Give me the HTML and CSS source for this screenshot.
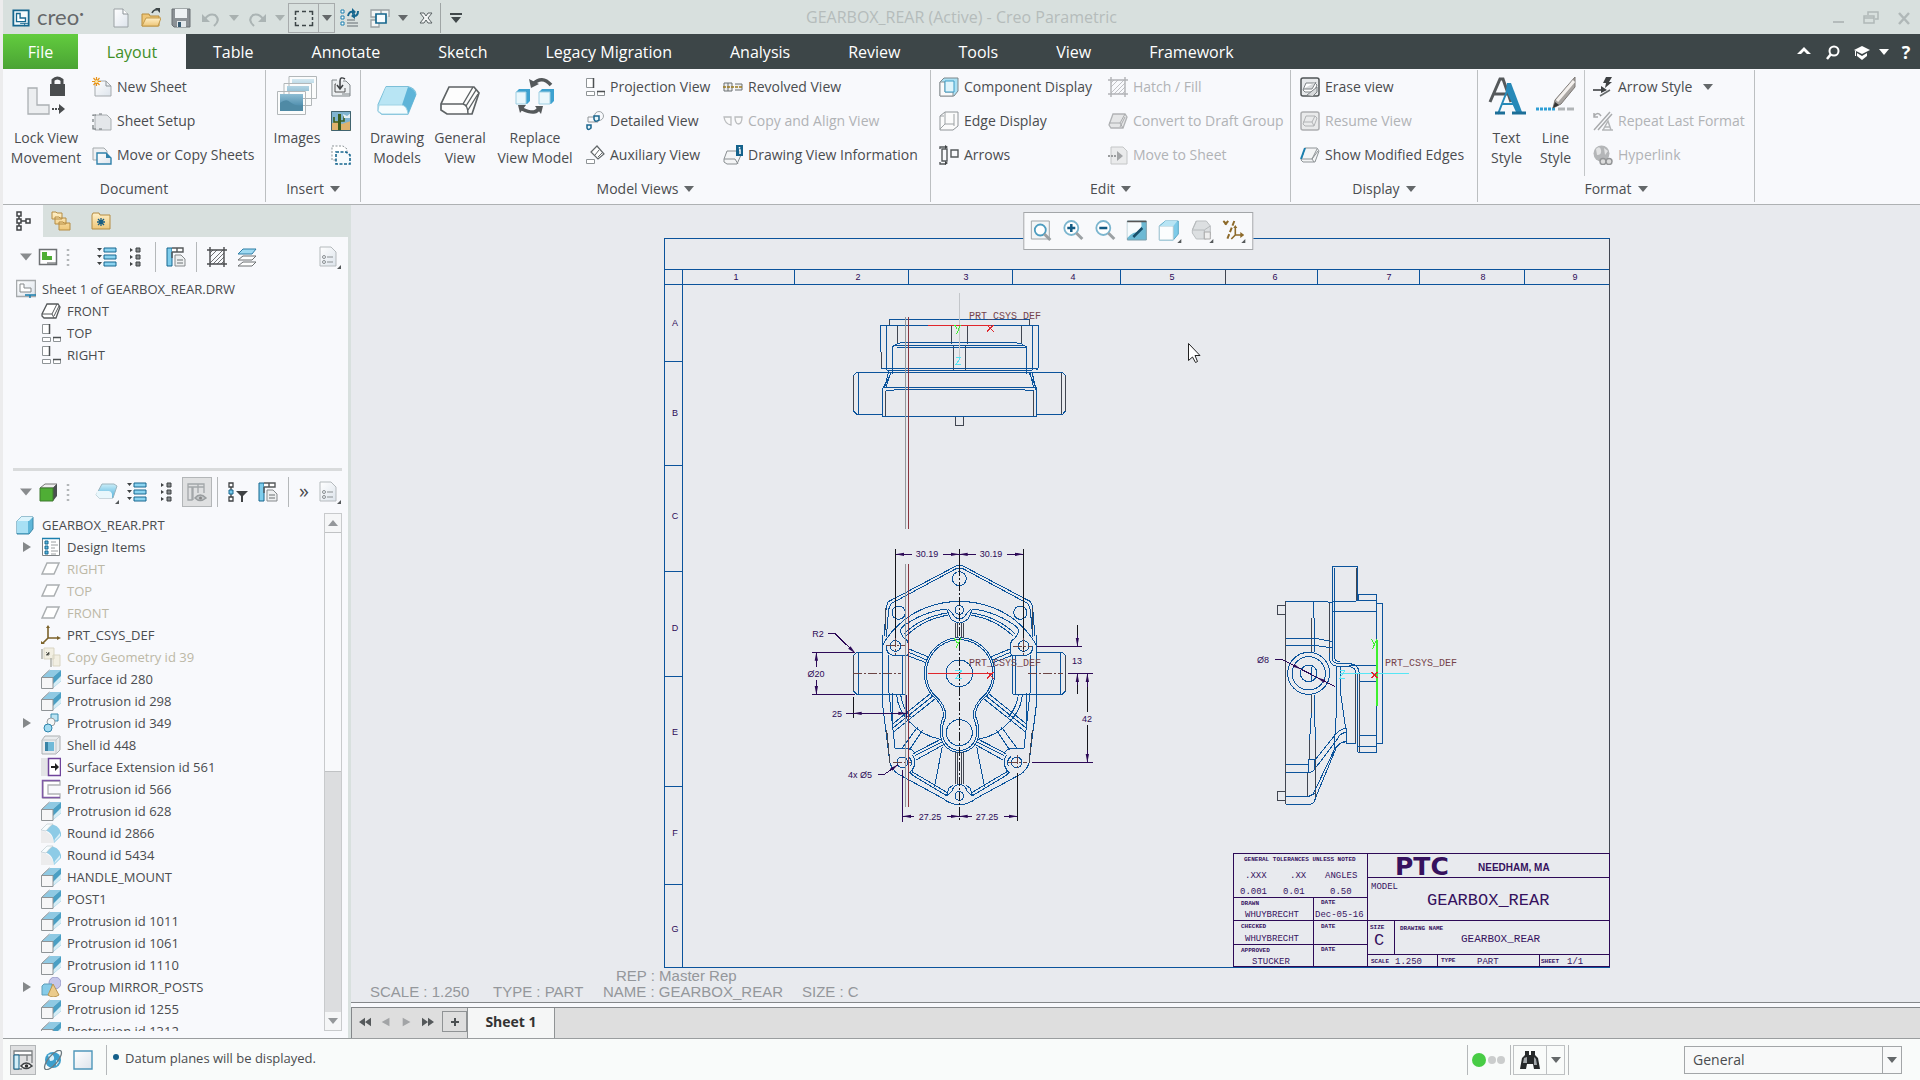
FILE: index.html
```html
<!DOCTYPE html>
<html lang="en">
<head>
<meta charset="utf-8">
<title>GEARBOX_REAR (Active) - Creo Parametric</title>
<link rel="stylesheet" href="styles.css">
</head>
<body>
<svg class="sprite" aria-hidden="true">
  <defs>
    <linearGradient id="g-blue" x1="0" y1="0" x2="0" y2="1"><stop offset="0" stop-color="#c9edf8"/><stop offset="1" stop-color="#4fb0dc"/></linearGradient>
    <linearGradient id="g-page" x1="0" y1="0" x2="1" y2="1"><stop offset="0" stop-color="#fff"/><stop offset="1" stop-color="#dde4ec"/></linearGradient>
    <linearGradient id="g-folder" x1="0" y1="0" x2="0" y2="1"><stop offset="0" stop-color="#fff0c8"/><stop offset="1" stop-color="#eec678"/></linearGradient>
    <linearGradient id="g-pic" x1="0" y1="0" x2="0" y2="1"><stop offset="0" stop-color="#d3e8f1"/><stop offset=".5" stop-color="#88b9d0"/><stop offset="1" stop-color="#377c9f"/></linearGradient>
  </defs>
  <symbol id="logo" viewBox="0 0 20 20"><path d="M1.500 1.500h17v17h-17z" fill="#f4fafc" stroke="#17678f" stroke-width="2"/><path d="M5 5h4v5h6v4H5z" fill="#fff" stroke="#17678f" stroke-width="1.500"/><path d="M9 16h9M14 16v3" stroke="#17678f"/></symbol>
  <symbol id="new" viewBox="0 0 20 20"><path d="M3 1h9l5 5v13H3z" fill="url(#g-page)" stroke="#9aa1a4"/><path d="M12 1v5h5" fill="#fff" stroke="#8b9397"/></symbol>
  <symbol id="open" viewBox="0 0 20 20"><path d="M1 18V6h7l1 2h9v10z" fill="#eec678" stroke="#b98d3c"/><path d="M1 18l4-8h15l-3 8z" fill="url(#g-folder)" stroke="#c39a4b"/><path d="M11 5q2-4 5-3" fill="none" stroke="#3d4648" stroke-width="1.500"/><path d="M14 0h5v5z" fill="#3d4648"/></symbol>
  <symbol id="save" viewBox="0 0 20 20"><path d="M1 1h18v18H3l-2-2z" fill="#8b9195" stroke="#6a7175"/><path d="M4 1h12v9H4z" fill="#eef2f4"/><path d="M6 13h9v6H6z" fill="#e3e8eb"/><path d="M7 14h3v5H7z" fill="#375a70"/></symbol>
  <symbol id="undo" viewBox="0 0 20 20"><path d="M4 11q4-6 10-4 6 5-1 11" fill="none" stroke="#abb4b4" stroke-width="2.200"/><path d="M1 6v8h8z" fill="#abb4b4"/></symbol>
  <symbol id="caret" viewBox="0 0 10 10"><path d="M0 2h10L5 8z" fill="currentColor"/></symbol>
  <symbol id="caret-bar" viewBox="0 0 12 12"><path d="M0 1h12v2H0zM1 5h10L6 11z" fill="#41484a"/></symbol>
  <symbol id="marquee" viewBox="0 0 20 20"><path d="M1.500 7V3.500H5M8 3.500h4M15 3.500h3.500V7M18.500 9v3M18.500 14v3.500H15M12 17.500H8M5 17.500H1.500V14M1.500 12V9" fill="none" stroke="#3d4648" stroke-width="1.500"/></symbol>
  <symbol id="regen" viewBox="0 0 20 20"><path d="M1 2h3v3H1zM1 8h3v3H1zM1 14h3v3H1z" fill="#fff" stroke="#1b7fae"/><path d="M7 12h8M7 15h11M7 18h11" stroke="#8b9397" stroke-width="1.500"/><path d="M8 8q1-5 5-4M18 3q0 5-4 5" fill="none" stroke="#17678f" stroke-width="2"/><path d="M12 0l4 4-4 3zM15 5l-4 3 4 3z" fill="#17678f"/></symbol>
  <symbol id="windows" viewBox="0 0 20 20"><path d="M1 2h10v7H1zM1 12h8v7H1zM8 2h11v7" fill="#f2f5f5" stroke="#9aa1a4" stroke-width="1.300"/><path d="M6 6h10v9H6z" fill="#f7fcfe" stroke="#17678f" stroke-width="1.700"/></symbol>
  <symbol id="closex" viewBox="0 0 16 16"><path d="M2 3h4l2 3 2-3h4l-4 5 4 5h-4l-2-3-2 3H2l4-5z" fill="#f4f6f6" stroke="#5a6264"/></symbol>
  <symbol id="w-min" viewBox="0 0 16 16"><path d="M3 11h11v2H3z" fill="#b4bbbb"/></symbol>
  <symbol id="w-res" viewBox="0 0 16 16"><path d="M5 5V2h10v7h-3M1 6h10v7H1zM1 8h10" fill="none" stroke="#b0b8b8" stroke-width="1.500"/></symbol>
  <symbol id="w-close" viewBox="0 0 16 16"><path d="M3 3l10 11M13 3L3 14" stroke="#b0b8b8" stroke-width="2.500"/></symbol>
  <symbol id="up" viewBox="0 0 16 16"><path d="M1 10l7-7 7 7h-4L8 7l-3 3z" fill="#fff"/></symbol>
  <symbol id="search" viewBox="0 0 16 16"><circle cx="9" cy="7" r="4.500" fill="none" stroke="#fff" stroke-width="2"/><path d="M6 10l-4 5" stroke="#fff" stroke-width="2.500"/></symbol>
  <symbol id="cap" viewBox="0 0 16 16"><path d="M0 6l8-4 8 4-8 4zM3 9l5 3 5-3v3l-5 4-5-4zM1 7h1v5H1z" fill="#fff"/></symbol>
  <symbol id="lock" viewBox="0 0 40 40"><path d="M2 12h9v17h12v9H2z" fill="#eceef0" stroke="#abb0b3" stroke-width="1.300"/><path d="M24 8h15v12H24z" fill="#4a4d4f"/><path d="M27 9V4q4-4 9 0v5" fill="none" stroke="#4a4d4f" stroke-width="3"/><path d="M26 33h9" stroke="#4a4d4f" stroke-width="2" stroke-dasharray="2 1"/><path d="M33 28l6 5-6 5z" fill="#4a4d4f"/></symbol>
  <symbol id="sheet-new" viewBox="0 0 20 20"><path d="M3 4h11l5 5v10H3z" fill="url(#g-page)" stroke="#a5aaad"/><path d="M14 4v5h5" fill="none" stroke="#8b9397"/><path d="M4.500 0v9M0 4.500h9M1.500 1l6 7M7.500 1l-6 7" stroke="#e8941c" stroke-width="1.200"/><circle cx="4.500" cy="4.500" r="1.500" fill="#ffe9a0"/></symbol>
  <symbol id="sheet-setup" viewBox="0 0 20 20"><path d="M3 4h12l4 4v11H3z" fill="#e4e7ea" stroke="#a9aeb1"/><path d="M1 5v-1h3M1 8v3M1 14v4h3M7 3h3M7 18h3" fill="none" stroke="#70777a" stroke-width="1.200"/></symbol>
  <symbol id="sheet-copy" viewBox="0 0 20 20"><path d="M1 3h11l3 3v9H1z" fill="#eff1f3" stroke="#a5aaad"/><path d="M5 8h9l5 5v6H5z" fill="url(#g-page)" stroke="#3081aa" stroke-width="1.400"/><path d="M14 8v5h5z" fill="#3081aa"/></symbol>
  <symbol id="images" viewBox="0 0 40 40"><path d="M12 .500h27.500v22H12zM7 7.500h27.500v22H7zM.500 15.500h28v23H.500z" fill="#fbfcfc" stroke="#b2b7b9"/><path d="M15 3h22v4H15zM10 10h22v5H10zM3 18h23v17H3z" fill="url(#g-pic)"/><path d="M3 27q6-5 10-1 6 5 13 3v6H3z" fill="#4f8aa5"/></symbol>
  <symbol id="insert-sheet" viewBox="0 0 20 20"><path d="M6 3H1v16h18V8l-4-4h-3" fill="#eceff1" stroke="#7f8588"/><path d="M14 2q-5-3-5 2v7M6 8l3 4 3-4" fill="none" stroke="#3f4244" stroke-width="1.500"/><path d="M5 7H4v8h10v-4" fill="none" stroke="#555"/><path d="M11 17h8" stroke="#7f8588"/></symbol>
  <symbol id="cactus" viewBox="0 0 20 20"><path d="M0 0h20v20H0z" fill="#7fb4d0"/><path d="M0 13l5-3 6 3 9-3v10H0z" fill="#dfb26c"/><path d="M7 3h3v16H7z" fill="#3b5e1f"/><path d="M3 6v5h4M13 5v5h-4" fill="none" stroke="#3b5e1f" stroke-width="1.600"/><path d="M12 3l4 2 4-3v5h-7z" fill="#e3eff3"/><path d="M.500.500h19v19H.500z" fill="none" stroke="#41646f"/></symbol>
  <symbol id="overlay" viewBox="0 0 20 20"><path d="M1 1h11l4 3v11H1z" fill="#fff" stroke="#8b9397" stroke-dasharray="2 1.500"/><path d="M5 7h10l4 3v9H5z" fill="#f7fbfd" stroke="#17678f" stroke-width="1.600" stroke-dasharray="3 1.500"/></symbol>
  <symbol id="block-blue" viewBox="0 0 40 30"><path d="M9 .500h22q8 2 8 8l-8 20H5l-4-3v-7z" fill="#a6dff2" stroke="#7cbfd8"/><path d="M9 1h22l-6 18H2z" fill="#b8e5f4"/><path d="M25 19L31 1q7 2 8 8l-8 19q-1-8-6-9z" fill="#5eb4d8"/><path d="M2 19h23q5 1 6 9H5l-4-3z" fill="#f5fcfe" stroke="#9ed2e4"/></symbol>
  <symbol id="block-gray" viewBox="0 0 40 30"><path d="M9 1h25l5 6-7 21H7l-6-4v-6z" fill="#fdfdfd" stroke="#5d6264" stroke-width="1.700"/><path d="M1 18h22q5 1 5 10M23 18L33 1M26 20L36 4M28 24L38 8" fill="none" stroke="#5d6264" stroke-width="1.400"/></symbol>
  <symbol id="replace" viewBox="0 0 40 40"><path d="M1 16l3-3h11v12l-3 3H1zM24 16l3-3h12v12l-3 3H24z" fill="#3ea2d0"/><path d="M1 16h10v12H1zM24 16h11v12H24z" fill="#eaf7fc" stroke="#9fcfe2"/><path d="M18 8Q27-1 36 9M24 31q-2 9-17 2" fill="none" stroke="#55595b" stroke-width="3.500"/><path d="M14 3l2 9 8-4zM20 30l8 0-2 8zM3 29l8 0-6 8z" fill="#55595b"/></symbol>
  <symbol id="proj" viewBox="0 0 20 20"><path d="M1.500 1.500h7v9h-7zM1.500 14.500h8v4h-8zM12.500 14.500h7v4h-7z" fill="#fff" stroke="#8f9497"/><path d="M8.500 1v10M12 14.500h8" stroke="#4c5052" stroke-width="1.500"/></symbol>
  <symbol id="detail" viewBox="0 0 20 20"><circle cx="14" cy="5" r="4.500" fill="none" stroke="#9da3a6"/><path d="M3 6h10v5H3z" fill="none" stroke="#8f9497"/><path d="M9 5h5v4q-4 3-5-1zM2 14h4v3q-3 3-4 0z" fill="#e8f6fb" stroke="#1a668e" stroke-width="1.500"/></symbol>
  <symbol id="aux" viewBox="0 0 20 20"><path d="M12 1l7 8-6 5-7-7z" fill="#fff" stroke="#63686a" stroke-width="1.200"/><path d="M14 5l-4 5M17 8l-4 4" stroke="#63686a"/><path d="M1.500 14.500h8v4h-8z" fill="#fff" stroke="#8f9497"/></symbol>
  <symbol id="revolve" viewBox="0 0 20 20"><path d="M1 6h8v8H1zM5 6v8M12 7h7v6h-7" fill="#eee" stroke="#6b7072"/><path d="M0 10h20" stroke="#9c7b1e" stroke-width="1.500" stroke-dasharray="3 1"/></symbol>
  <symbol id="copyalign" viewBox="0 0 20 20"><path d="M1 6h7v8Q2 13 1 6zM12 6h7q0 7-4 7-3-1-3-7z" fill="#fafafa" stroke="#bbbdbf" stroke-width="1.300"/></symbol>
  <symbol id="info" viewBox="0 0 20 20"><path d="M4 6h10l4 4-4 9H4l-3-2v-3z" fill="#f4f5f6" stroke="#8a8f92"/><path d="M1 14h11l3 5" fill="none" stroke="#8a8f92"/><path d="M13 0h7v11h-7z" fill="#14628c"/><path d="M16 5h1v4M16.500 2v1.500" stroke="#fff" stroke-width="1.500"/></symbol>
  <symbol id="comp" viewBox="0 0 20 20"><path d="M1 5l4-4h14v13l-4 5H1z" fill="#a9e0f4" stroke="#7c878b"/><path d="M1 5h5v10h8v4H1z" fill="#fafafa" stroke="#8d9295"/><path d="M6 4h9v11H6z" fill="#dff4fb" stroke="#3d9cc5"/></symbol>
  <symbol id="edge" viewBox="0 0 20 20"><path d="M1 5l5-4h13v14l-5 4H1z" fill="#fbfbfb" stroke="#909598"/><path d="M6 1v12L1 18M6 13h9M15 3v12M1 5h4" fill="none" stroke="#9da2a5"/></symbol>
  <symbol id="arrows" viewBox="0 0 20 20"><path d="M1 4V2h6M1 17v2h6M3 4h5v12H3zM12 5h7v7h-7z" fill="none" stroke="#54595b" stroke-width="1.400"/><path d="M6 0l3 2-3 2zM6 16l3 2-3 2z" fill="#3f4244"/></symbol>
  <symbol id="hatch" viewBox="0 0 20 20"><path d="M0 3h20M0 17h20M3 0v20M17 0v20" stroke="currentColor" stroke-width="1.400"/><path d="M3 10l7-7M3 16L16 3M10 17l7-7M6 17L17 6M3 6l3-3M14 17l3-3" stroke="currentColor" stroke-width=".8"/></symbol>
  <symbol id="draft" viewBox="0 0 20 20"><path d="M5 3h12l2 3-4 11H3l-2-3z" fill="#e5e6e7" stroke="#b1b3b5" stroke-width="1.300"/><path d="M1 12h11l5-9M12 12l3 5M12 16l5-10" fill="none" stroke="#a9abad"/></symbol>
  <symbol id="tosheet" viewBox="0 0 20 20"><path d="M3 2h12l4 4v13H3z" fill="#eaebec" stroke="#c4c6c7"/><path d="M0 11h9" stroke="#9a9c9e" stroke-width="2" stroke-dasharray="2 1"/><path d="M9 6l6 5-6 5z" fill="#a3a5a7"/></symbol>
  <symbol id="erase" viewBox="0 0 20 20"><rect x="1" y="1" width="18" height="18" rx="2" fill="#e8eaec" stroke="#505557" stroke-width="1.500"/><path d="M6 6h9l2 2-3 7H5l-2-2z" fill="#fff" stroke="#7d8285"/><path d="M3 12h9l4-7M7 18L17 10v5l-4 4" fill="#d9dbdd" stroke="#7d8285"/></symbol>
  <symbol id="resume" viewBox="0 0 20 20"><rect x="1" y="1" width="18" height="18" rx="2" fill="#e9eaeb" stroke="#adafb1" stroke-width="1.500"/><path d="M6 5h9l2 2-3 8H5l-2-2zM3 11h9l3-6M12 11l2 4" fill="none" stroke="#b1b3b5"/></symbol>
  <symbol id="modedge" viewBox="0 0 20 20"><path d="M5 3h12l2 3-4 11H3l-2-2z" fill="#f4f5f6" stroke="#8f9497"/><path d="M1 14h11l5-10M12 14l2 3M12 14l6-8" fill="none" stroke="#8f9497"/><path d="M5 3L1 14" stroke="#1b7fae" stroke-width="2"/></symbol>
  <symbol id="lstyle" viewBox="0 0 40 40"><path d="M0 33h20" stroke="#2f9fd5" stroke-width="3" stroke-dasharray="3 1"/><path d="M22 33h18" stroke="#b1b5b7" stroke-width="3" stroke-dasharray="7 2"/><path d="M39 1v10L25 28l-8 4 2-8z" fill="#a9a5a2" stroke="#7d7976"/><path d="M21 25L38 5" stroke="#f5f1ee" stroke-width="3"/><path d="M17 32l2-6 4 3z" fill="#333"/></symbol>
  <symbol id="astyle" viewBox="0 0 20 20"><path d="M0 13h9" stroke="#3f4244" stroke-width="1.600"/><path d="M13 0h6l-3 5h3l-7 6 1-5h-3zM8 9l6 4-6 3z" fill="#3f4244"/><path d="M7 19l10-6" stroke="#65696b" stroke-width="1.500"/></symbol>
  <symbol id="repeat" viewBox="0 0 20 20"><path d="M1 2v4h4M1 5q4-5 7 0M1 19L17 1M5 19L19 3" fill="none" stroke="#a9abad" stroke-width="1.500"/><path d="M10 19l5-9 3 9M12 16h5M9 19h11" fill="none" stroke="#b4b6b8" stroke-width="1.500"/></symbol>
  <symbol id="link" viewBox="0 0 20 20"><circle cx="8.500" cy="8.500" r="8" fill="#b4b6b8"/><path d="M3 4q4-4 5 1t-4 5zM11 3l4 3-3 4z" fill="#e2e3e4"/><circle cx="10" cy="16.500" r="3" fill="#ddd" stroke="#949698" stroke-width="1.500"/><circle cx="16" cy="16.500" r="3" fill="#ddd" stroke="#949698" stroke-width="1.500"/></symbol>
  <symbol id="t-tree" viewBox="0 0 20 20"><path d="M4 1h4v4H4zM4 8h4v4H4zM4 15h4v4H4zM13 8h4v4h-4zM6 5v3M6 12v3M8 10h5" fill="none" stroke="#3f4244" stroke-width="1.500"/></symbol>
  <symbol id="t-folders" viewBox="0 0 20 20"><path d="M1 2V1h4l1 1h5v6H1zM4 7V6h4l1 1h6v6H4zM8 12v-1h4l1 1h6v7H8z" fill="url(#g-folder)" stroke="#b58c42"/></symbol>
  <symbol id="t-fav" viewBox="0 0 20 20"><path d="M1 4l1-2h6l1 2h10v14H1z" fill="url(#g-folder)" stroke="#b58c42"/><path d="M10 7v8M6 11h8M7 8l6 6M13 8l-6 6" stroke="#195d83" stroke-width="1.300"/></symbol>
  <symbol id="gsheet" viewBox="0 0 20 20"><path d="M1.500 2.500h17v15h-17z" fill="#fff" stroke="#6d7173" stroke-width="1.500"/><path d="M4 5h5v4h5v4H4z" fill="#4fae35"/><path d="M9 16h9" stroke="#55595b"/></symbol>
  <symbol id="gcube" viewBox="0 0 20 20"><path d="M2 6l5-4h12l-4 4z" fill="#eee" stroke="#777"/><path d="M15 6l4-4v12l-4 5z" fill="#4b4f51"/><path d="M2 6h13v13H2z" fill="#4fae35" stroke="#3e7a2e"/></symbol>
  <symbol id="grip" viewBox="0 0 4 20"><path d="M2 2v2M2 7v2M2 12v2M2 17v2" stroke="#b3b7b9" stroke-width="2.500"/></symbol>
  <symbol id="expand" viewBox="0 0 20 20"><path d="M7 1h12v4H7zM7 8h12v4H7zM7 15h12v4H7z" fill="#8bd3f0" stroke="#17678f"/><path d="M0 1h5L2.500 4zM0 8h5l-2.500 3zM0 15h5l-2.500 3z" fill="#3f4244"/></symbol>
  <symbol id="collapse" viewBox="0 0 20 20"><path d="M10 1h4v4h-4zM10 8h4v4h-4zM10 15h4v4h-4z" fill="#85898b" stroke="#3f4244"/><path d="M4 1v4l3-2zM4 8v4l3-2zM4 15v4l3-2z" fill="#3f4244"/></symbol>
  <symbol id="columns" viewBox="0 0 20 20"><path d="M1 1h5v18H1z" fill="#7fcdec" stroke="#17678f"/><path d="M6 1h11v4H6M11 1v4M6 5v6" fill="#fff" stroke="#55595b" stroke-width="1.400"/><path d="M9 8h6l4 4v7H9z" fill="#eef0f1" stroke="#85898b"/><path d="M11 13h6M11 16h6" stroke="#6b7072"/></symbol>
  <symbol id="colseye" viewBox="0 0 20 20"><path d="M1 2h16v3H1zM1 5h4v13H1zM6 5v13M11 2v9M17 5v6" fill="none" stroke="#a3a7a9" stroke-width="1.300"/><path d="M8 16q5-6 11 0-6 5-11 0z" fill="#c3c6c8" stroke="#999d9f" stroke-width="1.500"/><circle cx="13.500" cy="16" r="1.500" fill="#888"/></symbol>
  <symbol id="layers" viewBox="0 0 20 20"><path d="M1 19l5-4h13l-4 4zM1 13l5-4h13l-4 4z" fill="#fff" stroke="#6d7173"/><path d="M1 7l5-5h13l-4 5z" fill="#9fdaf2" stroke="#2f7ea6"/></symbol>
  <symbol id="settings" viewBox="0 0 24 24"><path d="M3 2h11l5 5v14H3z" fill="url(#g-page)" stroke="#b5babd"/><circle cx="7" cy="12" r="1.500" fill="none" stroke="#8b9093"/><circle cx="7" cy="17" r="1.500" fill="none" stroke="#8b9093"/><path d="M10 12h6M10 17h6" stroke="#8b9093"/><path d="M24 20v4h-4z" fill="#55595b"/></symbol>
  <symbol id="body" viewBox="0 0 24 24"><path d="M7 4h12l3 2-4 12H4l-3-3z" fill="url(#g-blue)" stroke="#9bb4be"/><path d="M2 11h12q4 1 3 7H4l-3-3z" fill="#e9f7fc"/><path d="M24 20v4h-4z" fill="#55595b"/></symbol>
  <symbol id="filter" viewBox="0 0 20 20"><path d="M1 1h4v4H1zM1 15h4v4H1zM3 5v10" fill="#fff" stroke="#3f4244" stroke-width="1.300"/><path d="M1 8h4v4H1z" fill="#79cbee" stroke="#17678f"/><path d="M8 9h12l-5 5v6h-2v-6z" fill="#3f4244"/></symbol>
  <symbol id="n-sheet" viewBox="0 0 20 20"><path d="M.500 1.500h19v16H.500z" fill="url(#g-page)" stroke="#a5a9ab" stroke-width="1.500"/><path d="M4 5h4v4h7v4H4z" fill="#fff" stroke="#85898b"/><path d="M9 16h11M14 16v3" stroke="#1b7fae" stroke-width="1.500"/></symbol>
  <symbol id="n-view" viewBox="0 0 20 20"><path d="M6 3h11l2 3-4 11H3l-2-2v-2z" fill="#fff" stroke="#55595b" stroke-width="1.300"/><path d="M1 13h10l2 4M11 13L16 3M13 15L18 5" fill="none" stroke="#55595b"/></symbol>
  <symbol id="n-part" viewBox="0 0 20 20"><path d="M1 6l4-4h12v12l-4 5H1z" fill="#5fb6d8" stroke="#3a86a6"/><path d="M1 6h11v12H1z" fill="#a8e0f4"/><path d="M1 6l4-4h12l-4 4z" fill="#dcf4fc"/></symbol>
  <symbol id="n-items" viewBox="0 0 20 20"><path d="M1.500 1.500h17v17h-17z" fill="#fff" stroke="#7d8285"/><path d="M1 1.500h18" stroke="#1b7fae" stroke-width="1.500"/><path d="M4 4h3v3H4zM4 9h3v3H4zM4 14h3v3H4z" fill="#57b7e0" stroke="#17678f"/><path d="M10 5h5M10 8h7M10 11h4M10 14h7M10 17h5" stroke="#9a9ea0"/></symbol>
  <symbol id="n-plane" viewBox="0 0 20 20"><path d="M1 15L6 4h12l-5 11z" fill="#fff" stroke="#abafb1" stroke-width="1.500"/></symbol>
  <symbol id="n-csys" viewBox="0 0 20 20"><path d="M7 3v10h10M7 13l-5 5" fill="none" stroke="#7b6229" stroke-width="1.600"/><path d="M5 3l2-3 2 3zM16 11l4 2-4 2zM0 16l4 3H0z" fill="#7b6229"/></symbol>
  <symbol id="n-copy" viewBox="0 0 20 20"><path d="M3 1h10v11H3zM12 8h7v11h-7z" fill="#f2efe2" stroke="#d9d5c3"/><path d="M1 2v10M10 11v9" stroke="#aeb0a8" stroke-width="1.500"/><path d="M5 5l3 3M8 5v3H5" stroke="#77786f"/></symbol>
  <symbol id="n-prot" viewBox="0 0 20 20"><path d="M1 8l8-7h11l-8 7z" fill="#8fc9e3"/><path d="M12 8l8-7v11l-8 7z" fill="#4a9fc4"/><path d="M12 15l8-8v5l-8 7z" fill="#d4edf6"/><path d="M.500 8.500h11.500v11H.500z" fill="#f6f6f7" stroke="#8f9497"/><path d="M.500 8.500l8-7.500" stroke="#8f9497"/></symbol>
  <symbol id="n-pattern" viewBox="0 0 20 20"><path d="M10 1h7v7h-7z" fill="#bce4f3" stroke="#3b8db1"/><circle cx="10" cy="9" r="4" fill="#f5f6f6" stroke="#9a9ea0"/><circle cx="7" cy="15" r="4" fill="#a3dbf1" stroke="#2d84ac"/></symbol>
  <symbol id="n-shell" viewBox="0 0 20 20"><path d="M1 5l3-4h15v14l-4 4H1z" fill="#e9ecee" stroke="#acb0b2"/><path d="M1 5h14v14M15 5l4-4" fill="none" stroke="#c4c7c9"/><path d="M4 7h9v9H4z" fill="#71bad8"/><path d="M4 7h3v9H4z" fill="#3983a5"/></symbol>
  <symbol id="n-ext" viewBox="0 0 20 20"><path d="M0 1h7v18H0z" fill="#e3e4e6"/><path d="M7.500 1.500h12v17h-12z" fill="#fff" stroke="#6f439b" stroke-width="1.500"/><path d="M10 9h4V6l4 4-4 4v-3h-4z" fill="#222"/></symbol>
  <symbol id="n-sweep" viewBox="0 0 20 20"><path d="M19 2H2v17h17v-4H7V6h12z" fill="#fff" stroke="#b0b3b5" stroke-width="1.300"/><path d="M19 1.500H1.500v17H19" fill="none" stroke="#7f5aa6" stroke-width="1.500"/></symbol>
  <symbol id="n-round" viewBox="0 0 20 20"><path d="M0 8q11 0 13 12H0z" fill="#ececed"/><path d="M0 7L7 1q11 0 13 9v3l-7 7Q12 7 0 7z" fill="#8dcbe6"/><path d="M0 7L6 1h6q-3 2-7 7z" fill="#f7fcfe" stroke="#b9c3c8" stroke-width=".6"/><path d="M13 19l6-6v-3l-5 6z" fill="#d8eff8"/></symbol>
  <symbol id="n-group" viewBox="0 0 20 20"><circle cx="14" cy="6" r="6" fill="#c5c6ea" stroke="#9c9dca"/><path d="M1 9l2-2h8v9l-2 2H1z" fill="#86cbe8" stroke="#5c9db8"/><path d="M12 7l6 11q-6 4-11 0z" fill="#ebcb8c" stroke="#b99550"/></symbol>
  <symbol id="refit" viewBox="0 0 24 24"><path d="M1 2h18v18H1z" fill="#f3f5f6" stroke="#a0a5a8"/><circle cx="10" cy="11" r="5.500" fill="#fff" stroke="#4e9dc0" stroke-width="1.800"/><path d="M14 15l6 6" stroke="#9ba0a3" stroke-width="3"/></symbol>
  <symbol id="zin" viewBox="0 0 24 24"><circle cx="9" cy="9" r="7" fill="#fff" stroke="#7cb6cf" stroke-width="1.800"/><path d="M5 9h8M9 5v8" stroke="#125a83" stroke-width="2.500"/><path d="M14 14l6 6" stroke="#9ba0a3" stroke-width="3"/></symbol>
  <symbol id="zout" viewBox="0 0 24 24"><circle cx="9" cy="9" r="7" fill="#fff" stroke="#7cb6cf" stroke-width="1.800"/><path d="M5 9h8" stroke="#125a83" stroke-width="2.500"/><path d="M14 14l6 6" stroke="#9ba0a3" stroke-width="3"/></symbol>
  <symbol id="repaint" viewBox="0 0 24 24"><path d="M1 2h19v19H1z" fill="#6cb9d4" stroke="#7c9eab"/><path d="M1 3h14q2 9-8 11-4 2-6 5z" fill="#f6fbfd"/><path d="M16 9l-9 9" stroke="#184f6b" stroke-width="2.500"/><path d="M1 2.500h19" stroke="#555" stroke-width="1.500"/></symbol>
  <symbol id="dispstyle" viewBox="0 0 24 24"><path d="M1 7l6-5h13v13l-5 6H1z" fill="#7ecbe9" stroke="#5ba9c7"/><path d="M1 7h14v14H1z" fill="#fbfdfe" stroke="#a8c8d4"/><path d="M2 7l5-5h12l-4 5z" fill="#b7e4f4"/><path d="M23 20v4h-4z" fill="#55595b"/></symbol>
  <symbol id="views" viewBox="0 0 24 24"><path d="M6 2h10l4 5v9l-4 4H6l-4-6v-3z" fill="#dcdfe1" stroke="#bbbfc1"/><path d="M2 11h12l6-4M14 11v9M6 2l-4 9" fill="none" stroke="#b6babc"/><path d="M14 13h6v7h-6z" fill="#eee" stroke="#aaa"/><path d="M23 20v4h-4z" fill="#55595b"/></symbol>
  <symbol id="datums" viewBox="0 0 24 24"><path d="M1 2l5 5M6 2L1 7M12 2L5 20" stroke="#8d6a2a" stroke-width="2" stroke-dasharray="5 2"/><path d="M13 8v8h7M13 16l-4 4" fill="none" stroke="#8d6a2a" stroke-width="1.600"/><path d="M18 13l4 3-4 3zM11 9l2-3 2 3z" fill="#8d6a2a"/><path d="M23 20v4h-4z" fill="#55595b"/></symbol>
  <symbol id="navtoggle" viewBox="0 0 20 20"><path d="M1 1h18v4H1zM1 5v14h8M14 5v6M19 5v8" fill="#fff" stroke="#7b7f81" stroke-width="1.300"/><path d="M1 5h5v14H1z" fill="#d4edf6" stroke="#17678f"/><path d="M8 16q5-6 11 0-6 5-11 0z" fill="#fff" stroke="#3f4244" stroke-width="1.500"/><circle cx="13.500" cy="16" r="1.800" fill="#333"/></symbol>
  <symbol id="globe" viewBox="0 0 20 20"><circle cx="10" cy="10" r="8" fill="#3d9fcc"/><path d="M5 5q5-2 6 2t-4 4zM13 10l3 2-3 4z" fill="#d9f0f9"/><ellipse cx="10" cy="10" rx="12" ry="4.500" transform="rotate(-50 10 10)" fill="none" stroke="#6d7a80" stroke-width="1.300"/></symbol>
  <symbol id="square" viewBox="0 0 20 20"><path d="M1 1h18v18H1z" fill="url(#g-page)" stroke="#4f97ba" stroke-width="1.400"/></symbol>
  <symbol id="bino" viewBox="0 0 20 20"><path d="M5 1h4v4h2V1h4v4l3 3 2 11h-6l-1-5H7l-1 5H0L2 8l3-3z" fill="#26292a"/><path d="M4 8l3-1v6H3zM14 7l2 2 1 6h-3z" fill="#a2a7aa"/></symbol>
</svg>

<header class="titlebar">
  <div class="quick">
    <svg class="logo"><use href="#logo"/></svg><span class="brand">creo<sup>•</sup></span>
    <button class="q" aria-label="New"><svg class="i"><use href="#new"/></svg></button>
    <button class="q" aria-label="Open"><svg class="i"><use href="#open"/></svg></button>
    <button class="q" aria-label="Save"><svg class="i"><use href="#save"/></svg></button>
    <button class="q" aria-label="Undo"><svg class="i"><use href="#undo"/></svg></button>
    <button class="qc dim" aria-label="Undo list"><svg class="c"><use href="#caret"/></svg></button>
    <button class="q" aria-label="Redo"><svg class="i flip"><use href="#undo"/></svg></button>
    <button class="qc dim" aria-label="Redo list"><svg class="c"><use href="#caret"/></svg></button>
    <span class="split"><button class="q" aria-label="Select"><svg class="i"><use href="#marquee"/></svg></button><button class="qc" aria-label="Select options"><svg class="c"><use href="#caret"/></svg></button></span>
    <button class="q" aria-label="Regenerate"><svg class="i"><use href="#regen"/></svg></button>
    <button class="q" aria-label="Windows"><svg class="i"><use href="#windows"/></svg></button>
    <button class="qc" aria-label="Window list"><svg class="c"><use href="#caret"/></svg></button>
    <button class="q end" aria-label="Close window"><svg class="i16"><use href="#closex"/></svg></button>
    <button class="q" aria-label="Customize"><svg class="c12"><use href="#caret-bar"/></svg></button>
  </div>
  <h1>GEARBOX_REAR (Active) - Creo Parametric</h1>
  <div class="winbtns">
    <button aria-label="Minimize"><svg class="i16"><use href="#w-min"/></svg></button>
    <button aria-label="Restore"><svg class="i16"><use href="#w-res"/></svg></button>
    <button aria-label="Close"><svg class="i16"><use href="#w-close"/></svg></button>
  </div>
</header>

<nav class="tabs">
  <button class="file">File</button><button class="on">Layout</button><button>Table</button><button>Annotate</button><button>Sketch</button><button>Legacy Migration</button><button>Analysis</button><button>Review</button><button>Tools</button><button>View</button><button>Framework</button>
  <div class="tools">
    <button aria-label="Minimize ribbon"><svg class="i16"><use href="#up"/></svg></button>
    <button aria-label="Search"><svg class="i16"><use href="#search"/></svg></button>
    <button aria-label="Learning"><svg class="i16"><use href="#cap"/></svg></button>
    <button class="thin" aria-label="More"><svg class="c"><use href="#caret"/></svg></button>
    <button class="help">?</button>
  </div>
</nav>

<section class="ribbon">
  <div class="group doc">
    <div class="items">
      <button class="big"><svg class="i40"><use href="#lock"/></svg>Lock View<br>Movement</button>
      <div class="col">
        <button class="sm"><svg class="i"><use href="#sheet-new"/></svg>New Sheet</button>
        <button class="sm"><svg class="i"><use href="#sheet-setup"/></svg>Sheet Setup</button>
        <button class="sm"><svg class="i"><use href="#sheet-copy"/></svg>Move or Copy Sheets</button>
      </div>
    </div>
    <div class="label">Document</div>
  </div>
  <div class="group ins">
    <div class="items">
      <button class="big"><svg class="i40"><use href="#images"/></svg>Images</button>
      <div class="col">
        <button class="sm" aria-label="Drawing from file"><svg class="i"><use href="#insert-sheet"/></svg></button>
        <button class="sm" aria-label="Picture"><svg class="i"><use href="#cactus"/></svg></button>
        <button class="sm" aria-label="Overlay"><svg class="i"><use href="#overlay"/></svg></button>
      </div>
    </div>
    <button class="label">Insert <svg class="c"><use href="#caret"/></svg></button>
  </div>
  <div class="group views">
    <div class="items">
      <button class="big b64"><svg class="i40 low"><use href="#block-blue"/></svg>Drawing<br>Models</button>
      <button class="big b62"><svg class="i40 low"><use href="#block-gray"/></svg>General<br>View</button>
      <button class="big b88"><svg class="i40"><use href="#replace"/></svg>Replace<br>View Model</button>
      <div class="col c138">
        <button class="sm"><svg class="i"><use href="#proj"/></svg>Projection View</button>
        <button class="sm"><svg class="i"><use href="#detail"/></svg>Detailed View</button>
        <button class="sm"><svg class="i"><use href="#aux"/></svg>Auxiliary View</button>
      </div>
      <div class="col">
        <button class="sm"><svg class="i"><use href="#revolve"/></svg>Revolved View</button>
        <button class="sm" disabled><svg class="i"><use href="#copyalign"/></svg>Copy and Align View</button>
        <button class="sm"><svg class="i"><use href="#info"/></svg>Drawing View Information</button>
      </div>
    </div>
    <button class="label">Model Views <svg class="c"><use href="#caret"/></svg></button>
  </div>
  <div class="group edit">
    <div class="items">
      <div class="col c166">
        <button class="sm"><svg class="i"><use href="#comp"/></svg>Component Display</button>
        <button class="sm"><svg class="i"><use href="#edge"/></svg>Edge Display</button>
        <button class="sm"><svg class="i"><use href="#arrows"/></svg>Arrows</button>
      </div>
      <div class="col">
        <button class="sm" disabled><svg class="i"><use href="#hatch"/></svg>Hatch / Fill</button>
        <button class="sm" disabled><svg class="i"><use href="#draft"/></svg>Convert to Draft Group</button>
        <button class="sm" disabled><svg class="i"><use href="#tosheet"/></svg>Move to Sheet</button>
      </div>
    </div>
    <button class="label">Edit <svg class="c"><use href="#caret"/></svg></button>
  </div>
  <div class="group disp">
    <div class="items">
      <div class="col">
        <button class="sm"><svg class="i"><use href="#erase"/></svg>Erase view</button>
        <button class="sm" disabled><svg class="i"><use href="#resume"/></svg>Resume View</button>
        <button class="sm"><svg class="i"><use href="#modedge"/></svg>Show Modified Edges</button>
      </div>
    </div>
    <button class="label">Display <svg class="c"><use href="#caret"/></svg></button>
  </div>
  <div class="group fmt">
    <div class="items">
      <button class="big b48"><svg class="i40" viewBox="0 0 40 40"><path d="M3 26L13 3h3l8 23M7 18h13" fill="none" stroke="#55595b" stroke-width="3"/><path d="M11 38L22 10M21 9l11 28M15 28h13" fill="none" stroke="#2789b8" stroke-width="2"/><path d="M20 7h4l11 29h-6L19 14z" fill="#2789b8"/><path d="M8 37h10M25 37h14" stroke="#1d6f98" stroke-width="3"/></svg>Text<br>Style</button>
      <button class="big b48"><svg class="i40"><use href="#lstyle"/></svg>Line<br>Style</button>
      <div class="col ruled">
        <button class="sm"><svg class="i"><use href="#astyle"/></svg>Arrow Style <svg class="c"><use href="#caret"/></svg></button>
        <button class="sm" disabled><svg class="i"><use href="#repeat"/></svg>Repeat Last Format</button>
        <button class="sm" disabled><svg class="i"><use href="#link"/></svg>Hyperlink</button>
      </div>
    </div>
    <button class="label">Format <svg class="c"><use href="#caret"/></svg></button>
  </div>
</section>

<main>
  <aside class="side">
    <div class="sidetabs">
      <button class="on" aria-label="Model tree"><svg class="i"><use href="#t-tree"/></svg></button>
      <button aria-label="Folder browser"><svg class="i"><use href="#t-folders"/></svg></button>
      <button aria-label="Favorites"><svg class="i"><use href="#t-fav"/></svg></button>
    </div>
    <div class="upper">
      <div class="bar">
        <button class="t20 gray" aria-label="Collapse drawing tree"><svg class="c12"><use href="#caret"/></svg></button>
        <svg class="i pic"><use href="#gsheet"/></svg><svg class="grip"><use href="#grip"/></svg>
        <button class="t28 first" aria-label="Expand"><svg class="i"><use href="#expand"/></svg></button>
        <button class="t28" aria-label="Collapse"><svg class="i"><use href="#collapse"/></svg></button>
        <i class="rule"></i>
        <button class="t30" aria-label="Columns"><svg class="i"><use href="#columns"/></svg></button>
        <i class="rule"></i>
        <button class="t30" aria-label="Hatch"><svg class="i"><use href="#hatch"/></svg></button>
        <button class="t30" aria-label="Layers"><svg class="i"><use href="#layers"/></svg></button>
        <button class="t28 last" aria-label="Settings"><svg class="i24"><use href="#settings"/></svg></button>
      </div>
      <ul class="tree">
        <li class="root"><svg class="i"><use href="#n-sheet"/></svg>Sheet 1 of GEARBOX_REAR.DRW</li>
        <li><svg class="i"><use href="#n-view"/></svg>FRONT</li>
        <li><svg class="i"><use href="#proj"/></svg>TOP</li>
        <li><svg class="i"><use href="#proj"/></svg>RIGHT</li>
      </ul>
    </div>
    <hr>
    <div class="bar two">
      <button class="t20 gray" aria-label="Collapse model tree"><svg class="c12"><use href="#caret"/></svg></button>
      <svg class="i pic"><use href="#gcube"/></svg><svg class="grip"><use href="#grip"/></svg>
      <button class="t30 first" aria-label="Bodies"><svg class="i24"><use href="#body"/></svg></button>
      <button class="t30" aria-label="Expand"><svg class="i"><use href="#expand"/></svg></button>
      <button class="t30" aria-label="Collapse"><svg class="i"><use href="#collapse"/></svg></button>
      <button class="t30 pressed" aria-label="Tree columns"><svg class="i"><use href="#colseye"/></svg></button>
      <i class="rule"></i>
      <button class="t30" aria-label="Filter"><svg class="i"><use href="#filter"/></svg></button>
      <button class="t30" aria-label="Columns"><svg class="i"><use href="#columns"/></svg></button>
      <i class="rule"></i>
      <button class="more" aria-label="More">»</button>
      <button class="t28 last" aria-label="Settings"><svg class="i24"><use href="#settings"/></svg></button>
    </div>
    <div class="lower">
      <ul class="tree">
        <li class="root"><svg class="i"><use href="#n-part"/></svg>GEARBOX_REAR.PRT</li>
        <li class="kids"><svg class="i"><use href="#n-items"/></svg>Design Items</li>
        <li class="off"><svg class="i"><use href="#n-plane"/></svg>RIGHT</li>
        <li class="off"><svg class="i"><use href="#n-plane"/></svg>TOP</li>
        <li class="off"><svg class="i"><use href="#n-plane"/></svg>FRONT</li>
        <li><svg class="i"><use href="#n-csys"/></svg>PRT_CSYS_DEF</li>
        <li class="off"><svg class="i"><use href="#n-copy"/></svg>Copy Geometry id 39</li>
        <li><svg class="i"><use href="#n-prot"/></svg>Surface id 280</li>
        <li><svg class="i"><use href="#n-prot"/></svg>Protrusion id 298</li>
        <li class="kids"><svg class="i"><use href="#n-pattern"/></svg>Protrusion id 349</li>
        <li><svg class="i"><use href="#n-shell"/></svg>Shell id 448</li>
        <li><svg class="i"><use href="#n-ext"/></svg>Surface Extension id 561</li>
        <li><svg class="i"><use href="#n-sweep"/></svg>Protrusion id 566</li>
        <li><svg class="i"><use href="#n-prot"/></svg>Protrusion id 628</li>
        <li><svg class="i"><use href="#n-round"/></svg>Round id 2866</li>
        <li><svg class="i"><use href="#n-round"/></svg>Round id 5434</li>
        <li><svg class="i"><use href="#n-prot"/></svg>HANDLE_MOUNT</li>
        <li><svg class="i"><use href="#n-prot"/></svg>POST1</li>
        <li><svg class="i"><use href="#n-prot"/></svg>Protrusion id 1011</li>
        <li><svg class="i"><use href="#n-prot"/></svg>Protrusion id 1061</li>
        <li><svg class="i"><use href="#n-prot"/></svg>Protrusion id 1110</li>
        <li class="kids"><svg class="i"><use href="#n-group"/></svg>Group MIRROR_POSTS</li>
        <li><svg class="i"><use href="#n-prot"/></svg>Protrusion id 1255</li>
        <li><svg class="i"><use href="#n-prot"/></svg>Protrusion id 1312</li>
      </ul>
      <div class="scroll">
        <button aria-label="Scroll up"><svg class="c turn"><use href="#caret"/></svg></button>
        <div class="thumb"></div>
        <button class="down" aria-label="Scroll down"><svg class="c"><use href="#caret"/></svg></button>
      </div>
    </div>
  </aside>

  <section class="work">
    <div class="canvas">
      <svg class="drawing" viewBox="351 205 1569 797" role="img" aria-label="GEARBOX_REAR drawing sheet">
        <defs>
          <marker id="ar" markerUnits="userSpaceOnUse" markerWidth="26" markerHeight="12" refX="25" refY="6" orient="auto-start-reverse"><path d="M0 1L26 6 0 11z" fill="#2d0a57"/></marker>
        </defs>
        <!-- sheet border and zones -->
        <g class="ln">
          <path d="M664.500 238.500H1609.500V967.500H664.500zM664.500 269.500H1609.500M664.500 284.500H1609.500M682.500 269.500V967.500"/>
          <path d="M794.500 270V284M908.500 270V284M1012.500 270V284M1120.500 270V284M1419.500 270V284M1524.500 270V284M1317.500 270V284"/>
          <path d="M665 361.500H682M665 465.500H682M665 571.500H682M665 676.500H682M665 786.500H682M665 884.500H682"/>
          <path class="dk" d="M1609.500 239V967M1225.500 270V284"/>
        </g>
        <g class="zone">
          <text x="736" y="280">1</text><text x="858" y="280">2</text><text x="966" y="280">3</text><text x="1073" y="280">4</text><text x="1172" y="280">5</text><text x="1275" y="280">6</text><text x="1389" y="280">7</text><text x="1483" y="280">8</text><text x="1575" y="280">9</text>
          <text x="675" y="326">A</text><text x="675" y="416">B</text><text x="675" y="519">C</text><text x="675" y="631">D</text><text x="675" y="735">E</text><text x="675" y="836">F</text><text x="675" y="932">G</text>
        </g>
        <!-- top view -->
        <g class="ln" transform="translate(780 200) scale(.33333)">
          <path class="dk" d="M328 376V358M748 358V376M353 376V430M724 376V432M514 376V433M562 376V433M520 436V511M556 436V511M845 517V643M317 573V649M761 573V649M526 649V676H550V649M304 455V507M220 528V632M857 527V632"/>
          <path d="M328 358H748M301 376H775V503L770 510M302 376V455M319 376V510M757 376V510M338 522V440L350 432 368 427H702L725 432 740 441V522M345 436H735M350 442H740M304 506H774M320 512H757"/>
          <path d="M308 643H230L220 632M220 528L230 517H848L857 527M857 632L848 643H770M236 517V643M335 515L309 565V649H770V565L745 515M327 512L313 565M330 524L318 562M750 520L762 565M757 520L768 570M309 562H770M317 573L352 569H725L762 573M429 568H648"/>
          <path class="gy" d="M377 351V986"/><path class="rd" d="M386 351V986"/>
          <path class="lt" d="M538 280V480"/><path class="red" d="M443 376H632M621 375L641 395M641 375L621 395"/>
          <path class="grn" d="M524 375L532 388M541 375L530 402"/><path class="cyn" d="M527 472H542L527 495H542"/>
        </g>
        <!-- front view -->
        <g class="ln" transform="translate(780 530) scale(.33333)">
          <g id="half">
            <path d="M538 108H528L325 215Q317 230 318 250L312 318M538 115H530L333 221Q325 236 325 250L319 320"/>
            <circle cx="356" cy="248" r="20"/><circle cx="346" cy="348" r="16"/><circle cx="367" cy="697" r="16"/>
            <path d="M308 345Q330 305 370 272 440 216 538 214"/>
            <path d="M308 315V525L330 700Q338 722 356 733L490 806Q510 823 538 824"/>
            <path d="M326 375V480L345 655H385Q400 660 405 672M338 490V600"/>
            <path d="M360 305Q362 290 385 278 440 243 500 237L505 250 512 266Q525 278 538 278M372 312Q420 262 505 248M378 318Q430 268 505 255M360 305L372 325Q385 330 385 345V372Q380 378 368 375M505 237L518 252Q524 266 538 266"/>
            <path d="M318 348Q320 378 346 376H385"/>
            <path d="M538 323A107 107 0 0 0 455 495Q493 525 490 560 478 585 482 620A57 57 0 0 0 538 667M538 329A101 101 0 0 0 460 492Q500 525 497 562 484 590 488 615A51 51 0 0 0 538 661"/>
            <path d="M385 356L443 380M384 366L440 390M380 376L438 398M452 490L338 582M460 497L340 593M466 506L338 608"/>
            <path d="M350 494Q352 535 385 572M362 494Q366 530 392 562M385 572Q425 618 482 628M412 592L366 655M428 600L388 660"/>
            <path d="M482 628L400 670M486 636L405 676M489 645L408 690M487 650L463 772"/>
            <path d="M398 676Q408 690 402 712L390 728 400 737 500 797 515 785Q520 765 538 763M405 700L396 725 502 788M385 680Q398 690 392 708M500 797L506 775 520 765"/>
            <path class="dk" d="M526 278V323M532 278V323M526 667V763M532 667V763"/>
            <path d="M369 375V493M378 375V493M308 367H230L220 377M220 483L230 493H378M236 367V493"/>
            <path class="dk" d="M220 377V483M318 235V300M320 600L330 700"/>
          </g>
          <use href="#half" transform="matrix(-1 0 0 1 1077 0)"/>
          <circle cx="538" cy="146" r="21"/><circle cx="538" cy="240" r="13"/><circle cx="538" cy="798" r="13"/><circle cx="538" cy="430" r="40"/><circle cx="538" cy="608" r="39"/>
          <path class="bk" d="M346 57V340M538 57V110M730 57V365M712 730V872M220 500V565M892 285V325M892 455V493M922 460V545M922 585V670"/>
          <path class="bk axis" d="M538 110V872"/>
          <path class="bn axis" d="M220 430H362M745 430H850M318 348H378M700 349H755M340 697H392M685 697H740M346 325V375M730 325V375M712 675V720"/>
          <path class="gy" d="M377 102V830"/><path class="rd" d="M386 102V830"/>
          <g class="dim">
            <path d="M97 367H222M97 493H225M367 720V875M380 495V565M198 550H230M770 349H905M865 430H938M755 697H938"/>
            <path marker-end="url(#ar)" d="M397 73H347"/><path marker-end="url(#ar)" d="M489 73H538"/><path marker-end="url(#ar)" d="M588 73H538"/><path marker-end="url(#ar)" d="M681 73H730"/>
            <path marker-end="url(#ar)" d="M403 859H368"/><path marker-end="url(#ar)" d="M502 859H538"/><path marker-end="url(#ar)" d="M577 859H538"/><path marker-end="url(#ar)" d="M672 859H712"/>
            <path marker-end="url(#ar)" d="M143 311H165L226 370"/><path marker-end="url(#ar)" d="M109 410V367"/><path marker-end="url(#ar)" d="M109 450V493"/>
            <path marker-start="url(#ar)" marker-end="url(#ar)" d="M220 550H380"/><path marker-end="url(#ar)" d="M295 734H312L354 704"/>
            <path marker-end="url(#ar)" d="M892 315V348"/><path marker-end="url(#ar)" d="M892 465V431"/><path marker-end="url(#ar)" d="M922 470V431"/><path marker-end="url(#ar)" d="M922 660V697"/>
          </g>
          <path class="red" d="M443 430H640M621 426L641 446M641 426L621 446"/>
          <path class="grn" d="M523 325L533 340M542 325L528 355"/><path class="cyn" d="M526 422H545L526 447H545"/>
        </g>
        <!-- side view -->
        <g class="ln" transform="translate(1240 540) scale(.33333)">
          <path class="dk" d="M137 184V793M112 196H137V223H112zM112 754H137V781H112zM215 235V335M214 465V520M209 600V660M226 600V780M269 187V340M348 400V610M358 400V637M203 700V768M349 84V180"/>
          <path d="M137 184H232L278 187M137 793H210Q224 790 226 775M137 295H225L278 305M137 316H225L278 324M137 673H208M137 697H208M137 770H205L225 760M220 184V235M224 235V335M214 520L209 600M224 465V520L226 600"/>
          <circle cx="206" cy="400" r="63"/><circle cx="206" cy="400" r="50"/><circle cx="206" cy="400" r="25"/><path d="M215 380V425M277 184H349M277 80V360Q280 371 300 371H330Q356 373 358 400M277 80H352V180M283 84V355Q288 365 300 366M269 340V360Q275 380 300 380H320Q346 378 348 400M277 214H410M355 180V163H410V637H355M349 181H410M410 190H428V610H410M328 376H410M353 400V635M358 424H410M358 586H410M353 619H410"/>
          <path d="M289 380V520L284 600V628M302 380V460L317 565M225 660L285 585Q300 566 320 565V610H349M228 682L290 600Q300 578 320 577M226 775L288 625Q300 604 320 604M218 765L285 625Q298 606 315 608M205 660H225V685Q220 697 205 697z"/>
          <path class="cyn" d="M300 400H508M299 392H314L299 415H314"/><path class="grn w" d="M410 300V497"/><path class="grn" d="M394 296L402 312M411 296L398 326"/><path class="red" d="M394 396L412 414M412 396L394 414"/>
          <path class="dim" marker-end="url(#ar)" d="M105 358H125L182 387"/><path class="dim" marker-end="url(#ar)" d="M182 387L258 426 285 440 232 413"/>
        </g>
        <g class="dimtxt">
          <text x="927" y="557">30.19</text><text x="991" y="557">30.19</text><text x="818" y="637">R2</text><text x="816" y="677">Ø20</text><text x="837" y="717">25</text><text x="860" y="778">4x Ø5</text><text x="930" y="820">27.25</text><text x="987" y="820">27.25</text><text x="1077" y="664">13</text><text x="1087" y="722">42</text><text x="1263" y="663">Ø8</text>
        </g>
        <g class="csys"><text x="969" y="319">PRT_CSYS_DEF</text><text x="969" y="666">PRT_CSYS_DEF</text><text x="1385" y="666">PRT_CSYS_DEF</text></g>
        <!-- title block -->
        <g class="ln"><path class="tb" d="M1233.500 853.500H1609.500V966.500H1233.500zM1367.500 853.500V966.500M1233.500 897.500H1367.500M1233.500 920.500H1609.500M1233.500 944.500H1367.500M1313.500 897.500V966.500M1367.500 877.500H1609.500M1367.500 954.500H1609.500M1394.500 920.500V954.500M1437.500 954.500V966.500M1539.500 954.500V966.500"/></g>
        <g class="plot">
          <g class="p6"><text x="1244" y="861">GENERAL TOLERANCES UNLESS NOTED</text><text x="1241" y="905">DRAWN</text><text x="1321" y="904">DATE</text><text x="1241" y="928">CHECKED</text><text x="1321" y="928">DATE</text><text x="1241" y="952">APPROVED</text><text x="1321" y="951">DATE</text><text x="1370" y="929">SIZE</text><text x="1400" y="930">DRAWING NAME</text><text x="1371" y="963">SCALE</text><text x="1441" y="962">TYPE</text><text x="1541" y="963">SHEET</text></g>
          <g class="p9"><text x="1245" y="878">.XXX</text><text x="1290" y="878">.XX</text><text x="1325" y="878">ANGLES</text><text x="1240" y="894">0.001</text><text x="1283" y="894">0.01</text><text x="1330" y="894">0.50</text><text x="1245" y="917">WHUYBRECHT</text><text x="1315" y="917">Dec-05-16</text><text x="1245" y="941">WHUYBRECHT</text><text x="1252" y="964">STUCKER</text><text x="1395" y="964">1.250</text><text x="1477" y="964">PART</text><text x="1567" y="964">1/1</text><text x="1371" y="889">MODEL</text></g>
          <text class="p17" x="1427" y="905">GEARBOX_REAR</text><text class="p11" x="1461" y="942">GEARBOX_REAR</text><text class="p17" x="1374" y="945">C</text>
          <text class="ptc" x="1395" y="875">PTC</text><text class="need" x="1478" y="871">NEEDHAM, MA</text>
        </g>
        <g class="note"><text x="616" y="981">REP : Master Rep</text><text x="370" y="997">SCALE : 1.250</text><text x="493" y="997">TYPE : PART</text><text x="603" y="997">NAME : GEARBOX_REAR</text><text x="802" y="997">SIZE : C</text></g>
        <path d="M1188.500 343.500V360.500L1192.500 357 1195.500 362.500 1197.500 361.500 1195 355.500H1200z" fill="#fff" stroke="#222"/>
      </svg>
      <div class="floatbar">
        <button aria-label="Refit"><svg class="i24"><use href="#refit"/></svg></button>
        <button aria-label="Zoom in"><svg class="i24"><use href="#zin"/></svg></button>
        <button aria-label="Zoom out"><svg class="i24"><use href="#zout"/></svg></button>
        <button aria-label="Repaint"><svg class="i24"><use href="#repaint"/></svg></button>
        <button aria-label="Display style"><svg class="i24"><use href="#dispstyle"/></svg></button>
        <button aria-label="Saved views"><svg class="i24"><use href="#views"/></svg></button>
        <button aria-label="Datum display"><svg class="i24"><use href="#datums"/></svg></button>
      </div>
    </div>
    <div class="sheets">
      <button aria-label="First sheet"><svg class="n" viewBox="0 0 14 10"><path d="M7 0v10L0 5zM14 0v10L7 5z" fill="#55595b"/></svg></button>
      <button aria-label="Previous sheet"><svg class="n" viewBox="0 0 14 10"><path d="M11 0v10L2 5z" fill="#a2a4a6"/></svg></button>
      <button aria-label="Next sheet"><svg class="n" viewBox="0 0 14 10"><path d="M2 0v10l9-5z" fill="#a2a4a6"/></svg></button>
      <button aria-label="Last sheet"><svg class="n" viewBox="0 0 14 10"><path d="M0 0v10l7-5zM7 0v10l7-5z" fill="#55595b"/></svg></button>
      <button class="add" aria-label="New sheet"><svg class="c" viewBox="0 0 10 10"><path d="M1 5h8M5 1v8" stroke="#4c5052" stroke-width="2"/></svg></button>
      <button class="cur">Sheet 1</button>
    </div>
  </section>
</main>

<footer>
  <button class="nav pressed" aria-label="Toggle navigator"><svg class="i"><use href="#navtoggle"/></svg></button>
  <button class="t30" aria-label="Browser"><svg class="i"><use href="#globe"/></svg></button>
  <button class="t30" aria-label="Full screen"><svg class="i"><use href="#square"/></svg></button>
  <i class="rule"></i>
  <p class="msg">Datum planes will be displayed.</p>
  <i class="rule"></i>
  <svg class="lights" viewBox="0 0 36 20"><circle cx="9" cy="10" r="7" fill="#48cc45"/><circle cx="22" cy="10" r="4" fill="#cbcdcd"/><circle cx="31" cy="10" r="4" fill="#cbcdcd"/></svg>
  <i class="rule"></i>
  <span class="find"><button aria-label="Find"><svg class="i"><use href="#bino"/></svg></button><button class="dd" aria-label="Find options"><svg class="c"><use href="#caret"/></svg></button></span>
  <i class="rule"></i>
  <div class="combo"><select aria-label="Selection filter"><option>General</option></select><svg class="c"><use href="#caret"/></svg></div>
</footer>
</body>
</html>
```
FILE: styles.css
```css
* { box-sizing: border-box; margin: 0; padding: 0; }

body {
  display: flex;
  flex-direction: column;
  height: 100vh;
  overflow: hidden;
  border-left: 3px solid #ececed;
  background: #f8f9fc;
  color: #4a4c4f;
  font: 14px/20px "Open Sans", "Noto Sans", sans-serif;
}

button {
  display: flex;
  align-items: center;
  justify-content: center;
  border: 0;
  background: none;
  color: inherit;
  font: inherit;
  white-space: nowrap;
}

svg { flex: none; overflow: visible; }
.sprite { position: absolute; width: 0; height: 0; }
.i { width: 20px; height: 20px; }
.i16 { width: 16px; height: 16px; }
.i24 { width: 24px; height: 24px; }
.i40 { width: 40px; height: 40px; }
.c { width: 10px; height: 10px; color: #64686a; }
.c12 { width: 12px; height: 12px; }
.flip { transform: scaleX(-1); }
.turn { transform: rotate(180deg); }
.pressed { border: 1px solid #b3b6b8; background: #dfe0e1; }

/* title bar */
.titlebar {
  display: grid;
  grid-template-columns: 1fr auto 1fr;
  flex: none;
  height: 34px;
  background: #d8e0de;
}
.titlebar h1 { color: #b5bcbb; font-size: 16px; font-weight: 400; line-height: 34px; }
.quick { display: flex; align-items: center; padding-left: 9px; }
.logo { width: 18px; height: 18px; }
.brand { width: 76px; padding: 0 0 4px 7px; color: #66686a; font: 22px/28px Lato, sans-serif; }
.brand sup { font-size: 8px; }
.q { width: 30px; height: 30px; }
.qc { width: 16px; height: 30px; }
.dim .c { color: #a9b1b0; }
.split { display: flex; border: 1px solid #a7abac; }
.split .q { width: 29px; height: 28px; }
.split .qc { height: 28px; border-left: 1px solid #a7abac; }
.quick .end { border-right: 1px solid #9fa5a5; }
.winbtns { display: flex; justify-content: flex-end; }
.winbtns button { width: 33px; }

/* ribbon tabs */
.tabs { display: flex; flex: none; height: 35px; background: #3d4648; color: #fff; font-size: 16px; }
.tabs > button { padding: 0 29px; }
.tabs .file { width: 75px; padding: 0; background: linear-gradient(#62cc3e, #4aa334); }
.tabs .on { width: 108px; padding: 0; margin-right: -2px; background: #f8f9fc; color: #3f8f28; }
.tools { display: flex; margin-left: auto; }
.tools button { width: 29px; }
.tools .thin { width: 16px; }
.tools .thin .c { color: #fff; }
.tools .help { width: 28px; font-size: 18px; font-weight: 700; }

/* ribbon */
.ribbon {
  display: grid;
  grid-template-columns: 263px 95px 570px 360px 187px 277px;
  flex: none;
  height: 136px;
  padding: 1px 0 2px;
  border-bottom: 1px solid #aeb1b3;
}
.group { display: flex; flex-direction: column; border-right: 1px solid #bcbfc1; }
.items { display: flex; height: 106px; }
.big { flex-direction: column; justify-content: flex-start; width: 62px; padding-top: 6px; line-height: 20px; }
.big .i40 { margin-bottom: 12px; }
.doc .big { width: 86px; }
.big.b64 { width: 64px; }
.big.b88 { width: 88px; }
.big.b48 { width: 49px; }
.big .low { height: 30px; margin-top: 10px; }
.col { padding-left: 3px; }
.sm { gap: 5px; height: 34px; justify-content: flex-start; }
.sm .c { margin-left: 6px; }
.sm:disabled { color: #b1b3b6; }
.views .items { padding-left: 4px; }
.views .col { padding-left: 6px; }
.views .col + .col { padding-left: 0; }
.c138 { width: 144px; }
.edit .items { padding-left: 5px; }
.disp .items { padding-left: 6px; }
.c166 { width: 169px; }
.fmt .items { padding-left: 4px; }
.ruled { margin-left: 4px; padding-left: 8px; border-left: 1px solid #c3c6c8; }
.label { display: flex; align-items: center; justify-content: center; gap: 6px; width: 100%; height: 26px; }

/* navigator */
main { display: flex; flex: 1; min-height: 0; }
.side { display: flex; flex: none; flex-direction: column; width: 348px; border-right: 3px solid #d8e0de; }
.sidetabs { display: flex; flex: none; height: 32px; background: #d8e0de; }
.sidetabs button { width: 40px; }
.sidetabs .on { background: #f8f9fc; margin-right: -2px; }
.upper { flex: none; height: 231px; }
.bar { display: flex; flex: none; align-items: center; height: 40px; padding: 0 5px 0 13px; }
.bar.two { height: 42px; }
.t20 { width: 20px; height: 30px; }
.t28 { width: 29px; height: 30px; }
.t30 { width: 30px; height: 30px; }
.gray .c12 { color: #898c8e; }
.pic { margin-left: 2px; }
.grip { width: 4px; height: 20px; margin: 0 8px; }
.first { margin-left: 14px; }
.last { margin-left: auto; }
.more { width: 20px; height: 30px; padding-bottom: 3px; font-size: 20px; }
.rule { flex: none; width: 1px; height: 30px; margin: 0 5px; background: #b5b8ba; }
.side hr { flex: none; height: 3px; margin: 0 6px 0 10px; border: 0; background: #d9dbdc; }
.tree { list-style: none; font-size: 13px; line-height: 22px; }
.upper .tree { padding-top: 1px; }
.tree li { display: flex; align-items: center; gap: 6px; height: 22px; padding-left: 38px; white-space: nowrap; }
.tree .root { padding-left: 13px; }
.tree .off { color: #bcb8a6; }
.tree .kids { padding-left: 20px; }
.tree .kids::before {
  width: 0;
  margin-right: 4px;
  border: solid transparent;
  border-width: 5px 0 5px 8px;
  border-left-color: #85888a;
  content: "";
}
.lower { display: flex; flex: 1; min-height: 0; margin: 0 6px 7px 0; overflow: hidden; }
.lower .tree { flex: 1; padding-top: 1px; }
.scroll { display: flex; flex: none; flex-direction: column; width: 18px; border: 1px solid #c8cacc; background: #dcdddf; }
.scroll button { width: 16px; height: 18px; background: #f5f6f7; }
.scroll .c { color: #94979a; }
.thumb { height: 240px; border: solid #c0c2c4; border-width: 1px 0; background: #f8f9fb; }
.scroll .down { margin-top: auto; }

/* drawing area */
.work { display: flex; flex: 1; flex-direction: column; min-width: 0; }
.canvas { position: relative; flex: 1; min-height: 0; margin-bottom: 4px; border-bottom: 1px solid #84878a; background: #e8eaee; }
.drawing { display: block; width: 100%; height: 100%; }
.floatbar {
  position: absolute;
  top: 7px;
  left: 50%;
  display: flex;
  padding: 1px 2px;
  border: 1px solid #a3a6a9;
  background: #f8f9fb;
  transform: translateX(-49%);
}
.floatbar button { width: 32px; height: 34px; }

.ln { fill: none; stroke: #0b539b; shape-rendering: crispEdges; }
.ln path, .ln circle { vector-effect: non-scaling-stroke; }
.ln .dk { stroke: #414651; }
.ln .bk { stroke: #15151b; }
.ln .bn { stroke: #6b4544; }
.ln .axis { stroke-dasharray: 9 2 2 2; }
.ln .gy { stroke: #94979b; }
.ln .rd { stroke: #8a3640; }
.ln .lt { stroke: #c3c6ca; }
.ln .red { stroke: #e0262c; }
.ln .grn { stroke: #3df02e; }
.ln .w { stroke-width: 2; }
.ln .cyn { stroke: #55e6f5; }
.ln .dim, .ln .tb { stroke: #2d0a57; }
.zone, .dimtxt { fill: #2d0a57; font: 9px "Liberation Sans", sans-serif; text-anchor: middle; }
.csys { fill: #75434a; font: 10px "Liberation Mono", monospace; }
.plot { fill: #36125e; font-family: "Liberation Mono", monospace; }
.p6 { font-size: 6px; font-weight: 700; }
.p9 { font-size: 9px; }
.p11 { font-size: 11px; }
.p17 { font-size: 17px; }
.ptc { font: 700 25px "DejaVu Sans", sans-serif; }
.need { font: 700 10px "Liberation Sans", sans-serif; }
.note { fill: #94979b; font: 15px "Liberation Sans", sans-serif; }

.sheets { display: flex; flex: none; height: 31px; padding-left: 2px; border: solid #84878a; border-width: 1px 0 0 1px; background: #dedede; }
.sheets button { width: 21px; padding-bottom: 3px; }
.n { width: 12px; height: 10px; }
.sheets .add { width: 25px; height: 21px; margin: 3px 0 0 4px; padding: 0; border: 1px solid #909395; }
.sheets .cur { width: 88px; border: solid #909395; border-width: 0 1px; background: #f5f6f6; color: #333; font-weight: 700; }

/* status bar */
footer { display: flex; flex: none; align-items: center; height: 42px; padding: 0 18px 0 7px; border-top: 1px solid #9a9d9f; background: #f9fbfa; }
.nav { width: 26px; height: 30px; }
footer .t30:nth-child(2) { margin-left: 2px; }
footer .rule { margin-left: 8px; }
.msg { flex: 1; padding: 0 0 3px 1px; font-size: 13px; }
.msg::before { display: inline-block; width: 6px; height: 6px; margin: 0 6px 3px 0; border-radius: 3px; background: #155f8a; content: ""; }
.lights { width: 36px; height: 20px; margin: 0 -4px 0 -3px; }
.find { display: flex; height: 30px; margin: 0 -5px 0 -3px; border: 1px solid #bfc2c4; }
.find button { width: 32px; }
.find .dd { width: 18px; border-left: 1px solid #bfc2c4; }
.combo { position: relative; width: 218px; margin-left: 110px; }
.combo select {
  display: block;
  width: 100%;
  height: 28px;
  padding: 0 8px;
  border: 1px solid #a3a6a8;
  border-radius: 0;
  appearance: none;
  background: linear-gradient(#a3a6a8, #a3a6a8) right 18px top / 1px 100% no-repeat #f8f9f9;
  color: inherit;
  font: inherit;
}
.combo .c { position: absolute; top: 9px; right: 5px; }
```
